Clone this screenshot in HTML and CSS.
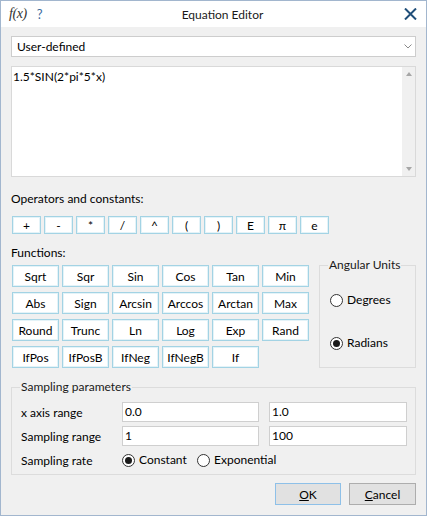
FILE: index.html
```html
<!DOCTYPE html>
<html lang="en">
<head>
    <meta charset="UTF-8">
    <meta name="viewport" content="width=device-width, initial-scale=1.0">
    <title>Equation Editor</title>
    <link rel="stylesheet" href="styles.css">
</head>
<body>
    <div class="window">
        <div class="titlebar">
            <div class="tb-left">
                <span class="fx">f(x)</span>
                <span class="help">?</span>
            </div>
            <div class="tb-title">Equation Editor</div>
            <div class="tb-right">
                <svg class="close" width="13" height="12" viewBox="0 0 13 12">
                    <path d="M1 0.5 L12 11.5 M12 0.5 L1 11.5" stroke="#1f4e79" stroke-width="2" fill="none"/>
                </svg>
            </div>
        </div>

        <div class="content">
            <div class="combo">
                <span>User-defined</span>
                <svg class="chevron" width="8" height="5" viewBox="0 0 8 5">
                    <path d="M0.5 0.5 L4 4 L7.5 0.5" stroke="#8a8a8a" stroke-width="1" fill="none"/>
                </svg>
            </div>

            <div class="editor">
                <div class="editor-text">1.5*SIN(2*pi*5*x)</div>
                <div class="vscroll">
                    <span class="arrow up"></span>
                    <span class="arrow down"></span>
                </div>
            </div>

            <div class="section-label ops-label">Operators and constants:</div>
            <div class="ops">
                <button class="key">+</button>
                <button class="key">-</button>
                <button class="key">*</button>
                <button class="key">/</button>
                <button class="key">^</button>
                <button class="key">(</button>
                <button class="key">)</button>
                <button class="key">E</button>
                <button class="key">π</button>
                <button class="key">e</button>
            </div>

            <div class="func-row">
                <div class="func-col">
                    <div class="section-label">Functions:</div>
                    <div class="func-grid">
                        <button class="key">Sqrt</button>
                        <button class="key">Sqr</button>
                        <button class="key">Sin</button>
                        <button class="key">Cos</button>
                        <button class="key">Tan</button>
                        <button class="key">Min</button>
                        <button class="key">Abs</button>
                        <button class="key">Sign</button>
                        <button class="key">Arcsin</button>
                        <button class="key">Arccos</button>
                        <button class="key">Arctan</button>
                        <button class="key">Max</button>
                        <button class="key">Round</button>
                        <button class="key">Trunc</button>
                        <button class="key">Ln</button>
                        <button class="key">Log</button>
                        <button class="key">Exp</button>
                        <button class="key">Rand</button>
                        <button class="key">IfPos</button>
                        <button class="key">IfPosB</button>
                        <button class="key">IfNeg</button>
                        <button class="key">IfNegB</button>
                        <button class="key">If</button>
                    </div>
                </div>

                <fieldset class="group angular">
                    <legend>Angular Units</legend>
                    <div class="radio-item"><span class="radio"></span>Degrees</div>
                    <div class="radio-item"><span class="radio checked"></span>Radians</div>
                </fieldset>
            </div>

            <fieldset class="group sampling">
                <legend>Sampling parameters</legend>
                <div class="sampling-grid">
                    <span class="row-label">x axis range</span>
                    <div class="field">0.0</div>
                    <div class="field">1.0</div>

                    <span class="row-label">Sampling range</span>
                    <div class="field">1</div>
                    <div class="field">100</div>

                    <span class="row-label">Sampling rate</span>
                    <div class="rate-options">
                        <div class="radio-item constant"><span class="radio checked"></span>Constant</div>
                        <div class="radio-item"><span class="radio"></span>Exponential</div>
                    </div>
                </div>
            </fieldset>

            <div class="actions">
                <button class="btn default"><u>O</u>K</button>
                <button class="btn"><u>C</u>ancel</button>
            </div>
        </div>
    </div>
</body>
</html>
```

FILE: styles.css
```css
* {
    box-sizing: border-box;
}

body {
    margin: 0;
    padding: 0;
    background-color: #f0f0f0;
    font-family: Lato, "Noto Sans", sans-serif;
    font-size: 12px;
    color: #000;
}

.window {
    width: 427px;
    height: 516px;
    border: 1px solid #a2b6ce;
    background-color: #f0f0f0;
    display: flex;
    flex-direction: column;
}

/* Barra de titulo */
.titlebar {
    height: 26px;
    background-color: #fff;
    display: flex;
    align-items: center;
}

.tb-left {
    width: 46px;
    display: flex;
    align-items: center;
    padding-left: 8px;
    gap: 10px;
}

.fx {
    font-family: "Liberation Serif", serif;
    font-style: italic;
    font-size: 14px;
    color: #333;
    letter-spacing: -0.4px;
}

.help {
    font-size: 13px;
    color: #3a6b9e;
}

.tb-title {
    flex: 1;
    text-align: center;
    font-size: 12px;
    color: #1a1a1a;
}

.tb-right {
    width: 28px;
    display: flex;
    align-items: center;
    padding-left: 6px;
}

.close {
    display: block;
}

.content {
    padding: 9px 10px 0 10px;
}

/* Combo */
.combo {
    height: 21px;
    background-color: #fff;
    border: 1px solid #cdcdcd;
    display: flex;
    align-items: center;
    justify-content: space-between;
    padding: 0 3px 0 5px;
}

/* Editor */
.editor {
    margin-top: 9px;
    height: 111px;
    background-color: #fff;
    border: 1px solid #d9d9d9;
    display: flex;
}

.editor-text {
    flex: 1;
    padding: 2px 1px;
    line-height: 16px;
}

.vscroll {
    width: 13px;
    background-color: #f0f0f0;
    display: flex;
    flex-direction: column;
    justify-content: space-between;
    align-items: center;
    padding: 5px 0;
}

.arrow {
    width: 0;
    height: 0;
    border-left: 3.5px solid transparent;
    border-right: 3.5px solid transparent;
}

.arrow.up {
    border-bottom: 4px solid #a6a6a6;
}

.arrow.down {
    border-top: 4px solid #a6a6a6;
}

.section-label {
    line-height: 16px;
}

.ops-label {
    margin-top: 14px;
}

/* Botones */
.key {
    font-family: Lato, "Noto Sans", sans-serif;
    font-size: 12px;
    color: #000;
    background-color: #fff;
    border: 1px solid #a3d3e4;
    box-shadow: inset 0 0 0 1px #e4f3f8;
    padding: 0;
    margin: 0;
}

.ops {
    margin-top: 9px;
    margin-left: 1px;
    display: flex;
    gap: 3px;
}

.ops .key {
    width: 29px;
    height: 18px;
}

.func-row {
    margin-top: 11px;
    display: flex;
}

.func-grid {
    margin-top: 4px;
    margin-left: 1px;
    display: grid;
    grid-template-columns: repeat(6, 47px);
    grid-auto-rows: 22px;
    column-gap: 3px;
    row-gap: 5px;
}

/* Grupos */
.group {
    margin: 0;
    border: 1px solid #dcdcdc;
    min-width: 0;
}

.group legend {
    padding: 0 1px;
    line-height: 16px;
    color: #1a1a1a;
}

.angular {
    flex: 1;
    margin-top: 12px;
    margin-left: 10px;
    padding: 19px 0 0 10px;
}

.angular legend {
    margin-left: -2px;
}

.angular .radio-item + .radio-item {
    margin-top: 27px;
}

.radio-item {
    display: flex;
    align-items: center;
    gap: 4px;
    line-height: 16px;
}

.radio {
    width: 13px;
    height: 13px;
    border: 1px solid #333;
    border-radius: 50%;
    background-color: #fff;
    display: flex;
    align-items: center;
    justify-content: center;
}

.radio.checked::after {
    content: "";
    width: 7px;
    height: 7px;
    border-radius: 50%;
    background-color: #1a1a1a;
}

.sampling {
    margin-top: 11px;
    padding: 7px 7px 4px 9px;
}

.sampling legend {
    margin-left: -1px;
}

.sampling-grid {
    display: grid;
    grid-template-columns: 91px 137px 138px;
    grid-auto-rows: 20px;
    column-gap: 10px;
    row-gap: 4px;
    align-items: center;
}

.field {
    height: 20px;
    background-color: #fff;
    border: 1px solid #cfcfcf;
    padding: 0 2px;
    line-height: 18px;
}

.rate-options {
    grid-column: span 2;
    display: flex;
    align-items: center;
}

.rate-options .constant {
    width: 75px;
}

/* Acciones */
.actions {
    margin-top: 8px;
    display: flex;
    justify-content: flex-end;
    gap: 8px;
}

.btn {
    height: 22px;
    width: 66px;
    font-family: Lato, "Noto Sans", sans-serif;
    font-size: 12px;
    color: #000;
    background-color: #e1e1e1;
    border: 1px solid #adadad;
    padding: 0;
}

.btn + .btn {
    width: 67px;
}

.btn.default {
    border-color: #8ec0e8;
}
```
